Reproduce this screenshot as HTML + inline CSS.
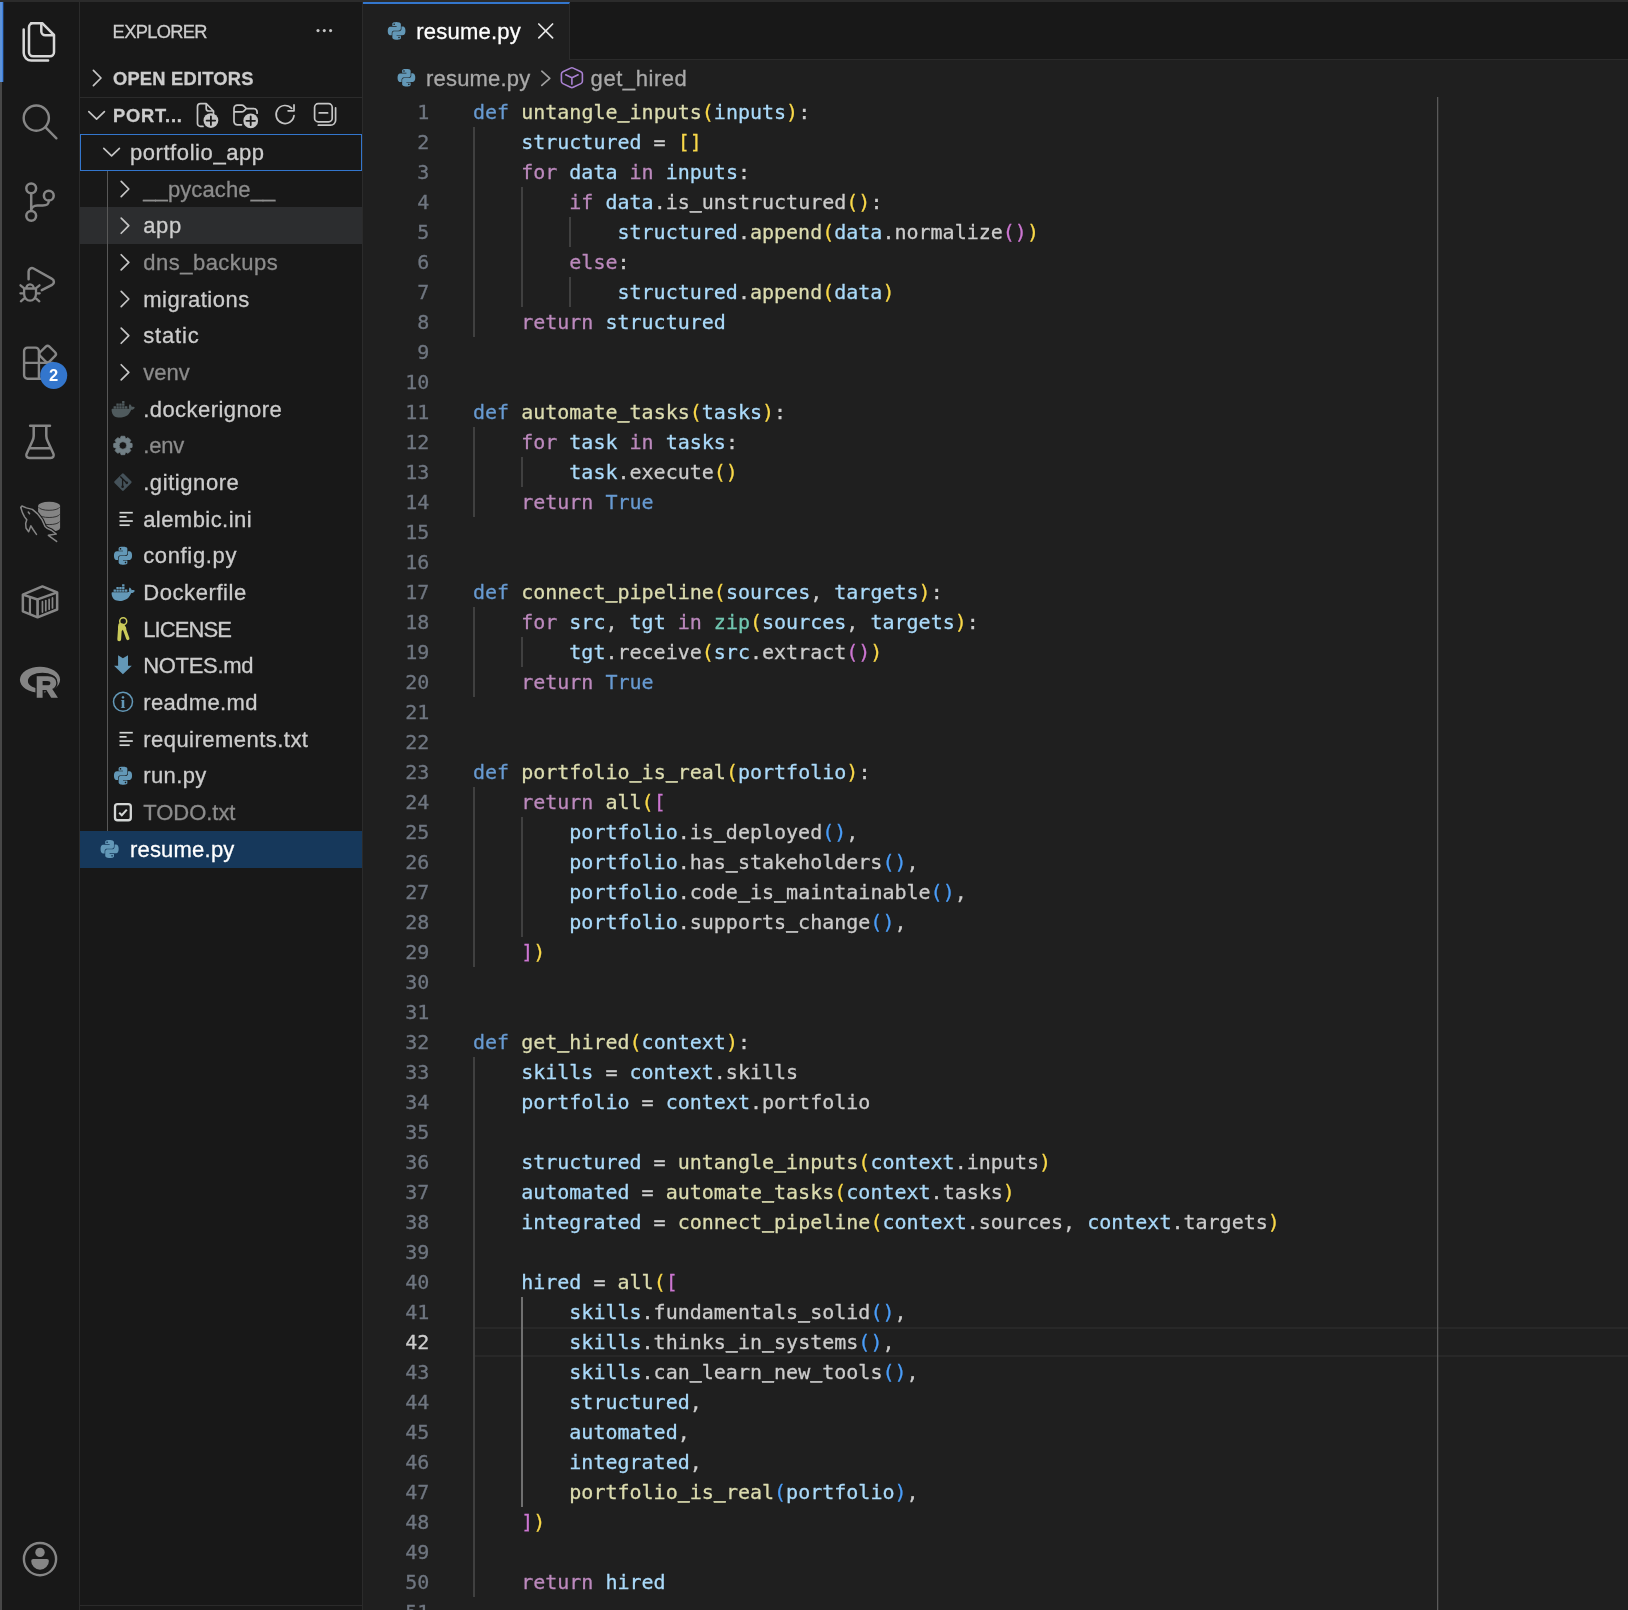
<!DOCTYPE html><html><head><meta charset="utf-8"><title>resume.py</title><style>
*{box-sizing:border-box;margin:0;padding:0}
html,body{width:1628px;height:1610px;overflow:hidden;background:#181818}
body{position:relative;-webkit-text-stroke:0.3px;font-family:"Liberation Sans",sans-serif;color:#cccccc;will-change:transform}
.abs{position:absolute}
#topline{position:absolute;left:0;top:0;width:1628px;height:2px;background:#2b2b2b}
#leftstrip{position:absolute;left:0;top:82px;width:2px;height:1528px;background:#474747}
#act{position:absolute;left:0;top:2px;width:80px;height:1608px;background:#181818;border-right:1px solid #2b2b2b}
#actind{position:absolute;left:0;top:2px;width:4px;height:80px;background:linear-gradient(90deg,#5f94da 0,#5f94da 2px,#3f80df 2px,#3f80df 3px,#223a58 3px,#223a58 4px)}
.ai{position:absolute;left:20px;width:40px;height:40px}
#side{position:absolute;left:80px;top:2px;width:283px;height:1608px;background:#181818;border-right:1px solid #2b2b2b}
#sidebot{position:absolute;left:80px;top:1605px;width:282px;height:1px;background:#2b2b2b}
.stitle{position:absolute;left:32.6px;top:19px;font-size:18.3px;line-height:22px;color:#cccccc;}
.ph{position:absolute;left:33px;font-size:18.3px;font-weight:bold;line-height:22px;color:#cccccc;}
.sep{position:absolute;left:0;width:282px;height:1px;background:#2b2b2b}
.row{position:absolute;left:0;width:282px;height:37px}
#side .tx{position:absolute;font-size:22px;line-height:26px;white-space:nowrap;color:#cccccc}
#side .tx.dim{color:#8c8c8c}
.row svg{position:absolute}
#ed{position:absolute;left:363px;top:2px;width:1265px;height:1608px;background:#1f1f1f}
#tabs{position:absolute;left:0;top:0;width:1265px;height:58px;background:#181818;border-bottom:1px solid #2b2b2b}
#tab{position:absolute;left:0;top:0;width:207px;height:58px;background:#1f1f1f;border-top:2px solid #3376cd;border-right:1px solid #2b2b2b}
#ov{position:absolute;left:0;top:0}
#tab .tx{position:absolute;left:53.3px;top:14.8px;font-size:22px;line-height:26px;color:#ffffff}
#bc{position:absolute;left:0;top:58px;width:1265px;height:37px}
#bc .tx{position:absolute;top:5.8px;font-size:22px;line-height:26px;color:#a9a9a9;white-space:nowrap}
#code{position:absolute;left:110px;top:95px;width:1155px;height:1520px;font-family:"DejaVu Sans Mono","Liberation Mono",monospace;font-size:20px;line-height:30px;color:#cccccc;white-space:pre}
.ln{position:absolute;left:-110px;width:66.3px;text-align:right;color:#6f7680;height:30px}
.ln.cur{color:#cccccc}
.cl{position:absolute;height:30px}
.cl i{font-style:normal;position:relative;top:-2.2px;text-shadow:0 1px 0 currentColor}
.k{color:#679ad1}.c{color:#bc89bd}.f{color:#dcdcaf}.v{color:#aadafa}.t{color:#71c6b1}
.b1{color:#f9d849}.b2{color:#cc76d1}.b3{color:#4a9df8}
.ig{position:absolute;width:2px;background:#404040}
.iga{background:#707070}
#curline{position:absolute;left:0;top:1230px;width:1155px;height:30px;border-top:2px solid #282828;border-bottom:2px solid #282828}
#ruler{z-index:3;position:absolute;left:1074px;top:95px;width:1px;height:1516px;background:#5a5a5a;box-shadow:1px 0 0 rgba(90,90,90,0.25)}
</style></head><body>
<div id="act"></div><div id="actind"></div><div id="leftstrip"></div>
<div id="side">
<span class="stitle" id="t_title" style="letter-spacing:-0.66px;margin-left:0.00px">EXPLORER</span>
<span class="ph" id="t_oe" style="top:66px;letter-spacing:0.23px;margin-left:0.00px">OPEN EDITORS</span>
<div class="sep" style="top:95px"></div>
<span class="ph" id="t_port" style="top:103px;letter-spacing:0.81px;margin-left:0.00px">PORT...</span>
<div class="row" style="top:132.00px;border:1px solid #3376cd"></div>
<span class="tx" id="r0" style="left:49.9px;top:137.8px;letter-spacing:0.58px;margin-left:0.00px">portfolio_app</span>
<div class="row" style="top:168.67px"></div>
<span class="tx dim" id="r1" style="left:63.2px;top:174.8px;letter-spacing:0.12px;margin-left:0.00px">__pycache__</span>
<div class="row" style="top:205.33px;background:#2c2d2f"></div>
<span class="tx" id="r2" style="left:63.2px;top:210.8px;letter-spacing:0.68px;margin-left:0.00px">app</span>
<div class="row" style="top:242.00px"></div>
<span class="tx dim" id="r3" style="left:63.2px;top:247.8px;letter-spacing:0.50px;margin-left:0.00px">dns_backups</span>
<div class="row" style="top:278.67px"></div>
<span class="tx" id="r4" style="left:63.2px;top:284.8px;letter-spacing:0.50px;margin-left:0.00px">migrations</span>
<div class="row" style="top:315.33px"></div>
<span class="tx" id="r5" style="left:63.2px;top:320.8px;letter-spacing:0.86px;margin-left:0.00px">static</span>
<div class="row" style="top:352.00px"></div>
<span class="tx dim" id="r6" style="left:63.2px;top:357.8px;letter-spacing:-0.01px;margin-left:0.00px">venv</span>
<div class="row" style="top:388.67px"></div>
<span class="tx" id="r7" style="left:63.2px;top:394.8px;letter-spacing:0.44px;margin-left:0.00px">.dockerignore</span>
<div class="row" style="top:425.33px"></div>
<span class="tx dim" id="r8" style="left:63.2px;top:430.8px;letter-spacing:-0.15px;margin-left:0.00px">.env</span>
<div class="row" style="top:462.00px"></div>
<span class="tx" id="r9" style="left:63.2px;top:467.8px;letter-spacing:0.57px;margin-left:0.00px">.gitignore</span>
<div class="row" style="top:498.67px"></div>
<span class="tx" id="r10" style="left:63.2px;top:504.8px;letter-spacing:0.44px;margin-left:0.00px">alembic.ini</span>
<div class="row" style="top:535.33px"></div>
<span class="tx" id="r11" style="left:63.2px;top:540.8px;letter-spacing:0.65px;margin-left:0.00px">config.py</span>
<div class="row" style="top:572.00px"></div>
<span class="tx" id="r12" style="left:63.2px;top:577.8px;letter-spacing:0.59px;margin-left:0.00px">Dockerfile</span>
<div class="row" style="top:608.67px"></div>
<span class="tx" id="r13" style="left:63.2px;top:614.8px;letter-spacing:-0.90px;margin-left:0.00px">LICENSE</span>
<div class="row" style="top:645.33px"></div>
<span class="tx" id="r14" style="left:63.2px;top:650.8px;letter-spacing:-0.30px;margin-left:0.00px">NOTES.md</span>
<div class="row" style="top:682.00px"></div>
<span class="tx" id="r15" style="left:63.2px;top:687.8px;letter-spacing:0.37px;margin-left:0.00px">readme.md</span>
<div class="row" style="top:718.67px"></div>
<span class="tx" id="r16" style="left:63.2px;top:724.8px;letter-spacing:0.47px;margin-left:0.00px">requirements.txt</span>
<div class="row" style="top:755.33px"></div>
<span class="tx" id="r17" style="left:63.2px;top:760.8px;letter-spacing:0.40px;margin-left:0.00px">run.py</span>
<div class="row" style="top:792.00px"></div>
<span class="tx dim" id="r18" style="left:63.2px;top:797.8px;letter-spacing:-0.03px;margin-left:0.00px">TODO.txt</span>
<div class="row" style="top:828.67px;background:#16385b"></div>
<span class="tx" id="r19" style="left:49.9px;top:834.8px;color:#ffffff;letter-spacing:0.22px;margin-left:0.00px">resume.py</span>
<div class="abs" style="left:27px;top:169px;width:1px;height:660px;background:#585858"></div>
</div><div id="sidebot"></div>
<div id="ed">
<div id="tabs"><div id="tab"><span class="tx" id="t_tab" style="letter-spacing:0.21px;margin-left:0.00px">resume.py</span></div></div>
<div id="bc"><span class="tx" id="t_bc1" style="left:63px;letter-spacing:0.20px;margin-left:0.00px">resume.py</span><span class="tx" id="t_bc2" style="left:227.6px;letter-spacing:0.56px;margin-left:0.00px">get_hired</span></div>
<div id="ruler"></div>
<div id="code"><div id="curline"></div><div class="ln" style="top:0px">1</div>
<div class="ln" style="top:30px">2</div>
<div class="ln" style="top:60px">3</div>
<div class="ln" style="top:90px">4</div>
<div class="ln" style="top:120px">5</div>
<div class="ln" style="top:150px">6</div>
<div class="ln" style="top:180px">7</div>
<div class="ln" style="top:210px">8</div>
<div class="ln" style="top:240px">9</div>
<div class="ln" style="top:270px">10</div>
<div class="ln" style="top:300px">11</div>
<div class="ln" style="top:330px">12</div>
<div class="ln" style="top:360px">13</div>
<div class="ln" style="top:390px">14</div>
<div class="ln" style="top:420px">15</div>
<div class="ln" style="top:450px">16</div>
<div class="ln" style="top:480px">17</div>
<div class="ln" style="top:510px">18</div>
<div class="ln" style="top:540px">19</div>
<div class="ln" style="top:570px">20</div>
<div class="ln" style="top:600px">21</div>
<div class="ln" style="top:630px">22</div>
<div class="ln" style="top:660px">23</div>
<div class="ln" style="top:690px">24</div>
<div class="ln" style="top:720px">25</div>
<div class="ln" style="top:750px">26</div>
<div class="ln" style="top:780px">27</div>
<div class="ln" style="top:810px">28</div>
<div class="ln" style="top:840px">29</div>
<div class="ln" style="top:870px">30</div>
<div class="ln" style="top:900px">31</div>
<div class="ln" style="top:930px">32</div>
<div class="ln" style="top:960px">33</div>
<div class="ln" style="top:990px">34</div>
<div class="ln" style="top:1020px">35</div>
<div class="ln" style="top:1050px">36</div>
<div class="ln" style="top:1080px">37</div>
<div class="ln" style="top:1110px">38</div>
<div class="ln" style="top:1140px">39</div>
<div class="ln" style="top:1170px">40</div>
<div class="ln" style="top:1200px">41</div>
<div class="ln cur" style="top:1230px">42</div>
<div class="ln" style="top:1260px">43</div>
<div class="ln" style="top:1290px">44</div>
<div class="ln" style="top:1320px">45</div>
<div class="ln" style="top:1350px">46</div>
<div class="ln" style="top:1380px">47</div>
<div class="ln" style="top:1410px">48</div>
<div class="ln" style="top:1440px">49</div>
<div class="ln" style="top:1470px">50</div>
<div class="ln" style="top:1500px">51</div>
<div class="cl" style="top:0px;left:0.00px"><span class="k">def</span> <span class="f">untangle<i>_</i>inputs</span><span class="b1">(</span><span class="v">inputs</span><span class="b1">)</span>:</div>
<div class="cl" style="top:30px;left:48.16px"><span class="v">structured</span> = <span class="b1">[]</span></div>
<div class="cl" style="top:60px;left:48.16px"><span class="c">for</span> <span class="v">data</span> <span class="c">in</span> <span class="v">inputs</span>:</div>
<div class="cl" style="top:90px;left:96.32px"><span class="c">if</span> <span class="v">data</span>.is<i>_</i>unstructured<span class="b1">()</span>:</div>
<div class="cl" style="top:120px;left:144.48px"><span class="v">structured</span>.<span class="f">append</span><span class="b1">(</span><span class="v">data</span>.normalize<span class="b2">()</span><span class="b1">)</span></div>
<div class="cl" style="top:150px;left:96.32px"><span class="c">else</span>:</div>
<div class="cl" style="top:180px;left:144.48px"><span class="v">structured</span>.<span class="f">append</span><span class="b1">(</span><span class="v">data</span><span class="b1">)</span></div>
<div class="cl" style="top:210px;left:48.16px"><span class="c">return</span> <span class="v">structured</span></div>
<div class="cl" style="top:300px;left:0.00px"><span class="k">def</span> <span class="f">automate<i>_</i>tasks</span><span class="b1">(</span><span class="v">tasks</span><span class="b1">)</span>:</div>
<div class="cl" style="top:330px;left:48.16px"><span class="c">for</span> <span class="v">task</span> <span class="c">in</span> <span class="v">tasks</span>:</div>
<div class="cl" style="top:360px;left:96.32px"><span class="v">task</span>.execute<span class="b1">()</span></div>
<div class="cl" style="top:390px;left:48.16px"><span class="c">return</span> <span class="k">True</span></div>
<div class="cl" style="top:480px;left:0.00px"><span class="k">def</span> <span class="f">connect<i>_</i>pipeline</span><span class="b1">(</span><span class="v">sources</span>, <span class="v">targets</span><span class="b1">)</span>:</div>
<div class="cl" style="top:510px;left:48.16px"><span class="c">for</span> <span class="v">src</span>, <span class="v">tgt</span> <span class="c">in</span> <span class="t">zip</span><span class="b1">(</span><span class="v">sources</span>, <span class="v">targets</span><span class="b1">)</span>:</div>
<div class="cl" style="top:540px;left:96.32px"><span class="v">tgt</span>.receive<span class="b1">(</span><span class="v">src</span>.extract<span class="b2">()</span><span class="b1">)</span></div>
<div class="cl" style="top:570px;left:48.16px"><span class="c">return</span> <span class="k">True</span></div>
<div class="cl" style="top:660px;left:0.00px"><span class="k">def</span> <span class="f">portfolio<i>_</i>is<i>_</i>real</span><span class="b1">(</span><span class="v">portfolio</span><span class="b1">)</span>:</div>
<div class="cl" style="top:690px;left:48.16px"><span class="c">return</span> <span class="f">all</span><span class="b1">(</span><span class="b2">[</span></div>
<div class="cl" style="top:720px;left:96.32px"><span class="v">portfolio</span>.is<i>_</i>deployed<span class="b3">()</span>,</div>
<div class="cl" style="top:750px;left:96.32px"><span class="v">portfolio</span>.has<i>_</i>stakeholders<span class="b3">()</span>,</div>
<div class="cl" style="top:780px;left:96.32px"><span class="v">portfolio</span>.code<i>_</i>is<i>_</i>maintainable<span class="b3">()</span>,</div>
<div class="cl" style="top:810px;left:96.32px"><span class="v">portfolio</span>.supports<i>_</i>change<span class="b3">()</span>,</div>
<div class="cl" style="top:840px;left:48.16px"><span class="b2">]</span><span class="b1">)</span></div>
<div class="cl" style="top:930px;left:0.00px"><span class="k">def</span> <span class="f">get<i>_</i>hired</span><span class="b1">(</span><span class="v">context</span><span class="b1">)</span>:</div>
<div class="cl" style="top:960px;left:48.16px"><span class="v">skills</span> = <span class="v">context</span>.skills</div>
<div class="cl" style="top:990px;left:48.16px"><span class="v">portfolio</span> = <span class="v">context</span>.portfolio</div>
<div class="cl" style="top:1050px;left:48.16px"><span class="v">structured</span> = <span class="f">untangle<i>_</i>inputs</span><span class="b1">(</span><span class="v">context</span>.inputs<span class="b1">)</span></div>
<div class="cl" style="top:1080px;left:48.16px"><span class="v">automated</span> = <span class="f">automate<i>_</i>tasks</span><span class="b1">(</span><span class="v">context</span>.tasks<span class="b1">)</span></div>
<div class="cl" style="top:1110px;left:48.16px"><span class="v">integrated</span> = <span class="f">connect<i>_</i>pipeline</span><span class="b1">(</span><span class="v">context</span>.sources, <span class="v">context</span>.targets<span class="b1">)</span></div>
<div class="cl" style="top:1170px;left:48.16px"><span class="v">hired</span> = <span class="f">all</span><span class="b1">(</span><span class="b2">[</span></div>
<div class="cl" style="top:1200px;left:96.32px"><span class="v">skills</span>.fundamentals<i>_</i>solid<span class="b3">()</span>,</div>
<div class="cl" style="top:1230px;left:96.32px"><span class="v">skills</span>.thinks<i>_</i>in<i>_</i>systems<span class="b3">()</span>,</div>
<div class="cl" style="top:1260px;left:96.32px"><span class="v">skills</span>.can<i>_</i>learn<i>_</i>new<i>_</i>tools<span class="b3">()</span>,</div>
<div class="cl" style="top:1290px;left:96.32px"><span class="v">structured</span>,</div>
<div class="cl" style="top:1320px;left:96.32px"><span class="v">automated</span>,</div>
<div class="cl" style="top:1350px;left:96.32px"><span class="v">integrated</span>,</div>
<div class="cl" style="top:1380px;left:96.32px"><span class="f">portfolio<i>_</i>is<i>_</i>real</span><span class="b3">(</span><span class="v">portfolio</span><span class="b3">)</span>,</div>
<div class="cl" style="top:1410px;left:48.16px"><span class="b2">]</span><span class="b1">)</span></div>
<div class="cl" style="top:1470px;left:48.16px"><span class="c">return</span> <span class="v">hired</span></div>
<div class="ig" style="left:0.0px;top:30px;height:210px"></div>
<div class="ig" style="left:48.2px;top:90px;height:120px"></div>
<div class="ig" style="left:96.3px;top:120px;height:30px"></div>
<div class="ig" style="left:96.3px;top:180px;height:30px"></div>
<div class="ig" style="left:0.0px;top:330px;height:90px"></div>
<div class="ig" style="left:48.2px;top:360px;height:30px"></div>
<div class="ig" style="left:0.0px;top:510px;height:90px"></div>
<div class="ig" style="left:48.2px;top:540px;height:30px"></div>
<div class="ig" style="left:0.0px;top:690px;height:180px"></div>
<div class="ig" style="left:48.2px;top:720px;height:120px"></div>
<div class="ig" style="left:0.0px;top:960px;height:540px"></div>
<div class="ig iga" style="left:48.2px;top:1200px;height:210px"></div></div>
</div>
<div id="topline"></div>
<svg id="ov" width="1628" height="1610" viewBox="0 0 1628 1610">
<path d="M31 23.2h11.2l11.8 11.8v17.2a4 4 0 0 1-4 4h-17a4 4 0 0 1-4-4v-25a4 4 0 0 1 4-4z" fill="none" stroke="#d7d7d7" stroke-width="2.5" stroke-linecap="round" stroke-linejoin="round" />
<path d="M41.3 23.4v7.8a4 4 0 0 0 4 4h8.2" fill="none" stroke="#d7d7d7" stroke-width="2.5" stroke-linecap="round" stroke-linejoin="round" />
<path d="M23.7 29.5v23.5a7.6 7.6 0 0 0 7.6 7.6h16.8" fill="none" stroke="#d7d7d7" stroke-width="2.5" stroke-linecap="round" stroke-linejoin="round" />
<circle cx="36.3" cy="118.1" r="12.6" fill="none" stroke="#868686" stroke-width="2.4" stroke-linecap="round" stroke-linejoin="round" /><path d="M45.6 127.4L56.4 138.3" fill="none" stroke="#868686" stroke-width="2.4" stroke-linecap="round" stroke-linejoin="round" />
<circle cx="31.2" cy="188.3" r="4.9" fill="none" stroke="#868686" stroke-width="2.5" stroke-linecap="round" stroke-linejoin="round" />
<circle cx="31.2" cy="215.8" r="4.9" fill="none" stroke="#868686" stroke-width="2.5" stroke-linecap="round" stroke-linejoin="round" />
<circle cx="48.8" cy="195.7" r="4.9" fill="none" stroke="#868686" stroke-width="2.5" stroke-linecap="round" stroke-linejoin="round" />
<path d="M31.2 193.3V210.8M48.8 200.8c0 4.6-3 4.7-6 4.7h-5.5c-3.5 0-6 2-6.1 5.3" fill="none" stroke="#868686" stroke-width="2.5" stroke-linecap="round" stroke-linejoin="round" />
<path d="M28.6 279.2V271.5a3.4 3.4 0 0 1 5-3l18.5 10.4a3.4 3.4 0 0 1 0 6L41.8 290.2" fill="none" stroke="#868686" stroke-width="2.5" stroke-linecap="round" stroke-linejoin="round" />
<path d="M24.1 288.5h11.9v5.6a5.95 6.6 0 0 1-11.9 0zM26.3 288.2a3.7 3.9 0 0 1 7.4 0M20.5 285.3l3.4 2.9M39.5 285.3l-3.4 2.9M20.4 293.3h3.5M36.2 293.3h3.5M20.9 301.3l3.9-3.5M39.3 301.3l-3.9-3.5" fill="none" stroke="#868686" stroke-width="2.3" stroke-linecap="round" stroke-linejoin="round" />
<path d="M27.5 347.6h8a3.4 3.4 0 0 1 3.4 3.4v27.7h-11.4a3.4 3.4 0 0 1-3.4-3.4v-24.3a3.4 3.4 0 0 1 3.4-3.4zM24.1 362.9h29M38.9 378.7h12" fill="none" stroke="#868686" stroke-width="2.4" stroke-linecap="round" stroke-linejoin="round" />
<rect x="41" y="347.5" width="13.2" height="13.2" rx="2.6" transform="rotate(45 47.6 354.1)" fill="none" stroke="#868686" stroke-width="2.4" stroke-linecap="round" stroke-linejoin="round" />
<circle cx="53.7" cy="375.4" r="13.5" fill="#3376cd"/>
<text x="53.7" y="381.3" text-anchor="middle" font-family="Liberation Sans, sans-serif" font-weight="bold" font-size="16.5" fill="#ffffff">2</text>
<path d="M30.1 425.7H50M33.7 425.9V436c0 2.2-.5 3.5-1.400 5.300L26.600 453.700c-1 2.200.2 4.400 2.800 4.400h21.200c2.600 0 3.800-2.200 2.800-4.400L47.700 441.300c-.9-1.800-1.400-3.100-1.400-5.300V425.900M30.800 448.200h18.400" fill="none" stroke="#868686" stroke-width="2.5" stroke-linecap="round" stroke-linejoin="round" />
<path d="M38.1 505.7a11 3.9 0 0 1 22 0v22.3a11 3.9 0 0 1-22 0z" fill="#848484"/>
<path d="M38.6 507.2a10.6 3.6 0 0 0 21 0" fill="none" stroke="#333333" stroke-width="1"/>
<path d="M38.6 514.4a10.6 3.6 0 0 0 21 0" fill="none" stroke="#333333" stroke-width="1"/>
<path d="M38.6 521.5a10.6 3.6 0 0 0 21 0" fill="none" stroke="#333333" stroke-width="1"/>
<polygon points="20.81,507.52 21.93,506.03 26.4,507.89 32.36,509.38 37.58,513.85 42.05,519.82 45.04,526.53 47.27,528.39 51.37,530.25 56.22,533.98 48.39,535.29 52.12,538.08 56.59,541.43 51,539.57 43.54,534.73 36.46,534.35 33.11,529.51 30.87,525.78 28.64,531.74 26.03,528.02 25.65,523.54 26.77,519.82 24.54,516.84 22.3,512.36" fill="#181818"/>
<polyline points="32.36,509.38 37.58,513.85 42.05,519.82 45.04,526.53 47.27,528.39 51.37,530.25 56.22,533.98" fill="none" stroke="#181818" stroke-width="3.6" stroke-linejoin="round" stroke-linecap="round"/>
<polyline points="20.81,507.52 21.93,506.03 26.4,507.89 32.36,509.38 37.58,513.85 42.05,519.82 45.04,526.53 47.27,528.39 51.37,530.25 56.22,533.98 48.39,535.29 52.12,538.08 56.59,541.43" fill="none" stroke="#868686" stroke-width="1.5" stroke-linejoin="round" stroke-linecap="round"/>
<polyline points="20.81,507.52 22.3,512.36 24.54,516.84 26.77,519.82 25.65,523.54 26.03,528.02 28.64,531.74 30.87,525.78 33.11,529.51 36.46,534.35" fill="none" stroke="#868686" stroke-width="1.5" stroke-linejoin="round" stroke-linecap="round"/>
<polyline points="28.26,511.99 29.57,513.67" fill="none" stroke="#868686" stroke-width="1.5" stroke-linecap="round"/>
<polygon points="42.43,586.4 57.15,592.36 57.15,609.51 37.58,617.34 22.86,611.37 22.86,594.6" fill="none" stroke="#868686" stroke-width="2.5" stroke-linecap="round" stroke-linejoin="round" />
<polyline points="22.86,594.6 37.58,599.44 57.15,592.36" fill="none" stroke="#868686" stroke-width="2.5" stroke-linejoin="round"/>
<polyline points="37.58,599.44 37.58,617.34" fill="none" stroke="#868686" stroke-width="2.7"/>
<polyline points="29.94,597.02 29.94,614.35" fill="none" stroke="#868686" stroke-width="2.2"/>
<polyline points="42.43,601.68 42.43,612.12" fill="none" stroke="#868686" stroke-width="1.7" stroke-linecap="round"/>
<polyline points="45.78,600.56 45.78,610.63" fill="none" stroke="#868686" stroke-width="1.7" stroke-linecap="round"/>
<polyline points="49.14,599.44 49.14,609.14" fill="none" stroke="#868686" stroke-width="1.7" stroke-linecap="round"/>
<polyline points="52.49,597.95 52.49,608.02" fill="none" stroke="#868686" stroke-width="1.7" stroke-linecap="round"/>
<path fill-rule="evenodd" fill="#848484" d="M19.9 679.800a20.100 13 0 1 0 40.200 0a20.100 13 0 1 0-40.200 0zM27.900 680.900a14.500 8.200 0 1 0 29 0a14.500 8.200 0 1 0-29 0z"/>
<text x="35.6" y="697.2" font-family="Liberation Sans, sans-serif" font-weight="bold" font-size="30" fill="#181818" stroke="#181818" stroke-width="4.2" stroke-linejoin="round">R</text>
<text x="35.6" y="697.2" font-family="Liberation Sans, sans-serif" font-weight="bold" font-size="30" fill="#848484" stroke="#848484" stroke-width="1.5" stroke-linejoin="miter">R</text>
<circle cx="40" cy="1559.1" r="16.1" fill="none" stroke="#868686" stroke-width="2.4" stroke-linecap="round" stroke-linejoin="round" /><circle cx="40" cy="1552.4" r="4.7" fill="#868686"/>
<path d="M33.2 1558.900h13.700a2 2 0 0 1 2 2a8.850 8.800 0 0 1-17.700 0a2 2 0 0 1 2-2z" fill="#868686"/>
<circle cx="318" cy="30.6" r="1.55" fill="#c5c5c5"/>
<circle cx="324.3" cy="30.6" r="1.55" fill="#c5c5c5"/>
<circle cx="330.6" cy="30.6" r="1.55" fill="#c5c5c5"/>
<path d="M93.4 70.4L101.0 78L93.4 85.6" fill="none" stroke="#c5c5c5" stroke-width="1.7" stroke-linecap="round" stroke-linejoin="round" />
<path d="M88.8 111.6L96.6 119.19999999999999L104.39999999999999 111.6" fill="none" stroke="#c5c5c5" stroke-width="1.7" stroke-linecap="round" stroke-linejoin="round" />
<path d="M203 126.400h-2.500a3 3 0 0 1-3-3v-16.700a3 3 0 0 1 3-3h5.700l7.300 7.300v2.400M206.200 103.900v4.500a2.600 2.600 0 0 0 2.600 2.600h4.500" fill="none" stroke="#c5c5c5" stroke-width="1.7" stroke-linecap="round" stroke-linejoin="round" />
<circle cx="210.9" cy="120.6" r="7.4" fill="#c5c5c5"/><path d="M206.600 120.600h8.600M210.900 116.300v8.600" fill="none" stroke="#181818" stroke-width="1.8" stroke-linecap="round" stroke-linejoin="round" />
<path d="M241.500 124.800h-4.200a3.300 3.300 0 0 1-3.300-3.300v-13a3.300 3.300 0 0 1 3.300-3.300h4.300c1 0 1.900.4 2.600 1.100l2.300 2.300h7.300a3.300 3.300 0 0 1 3.300 3.300v1.300M234.200 111.900h7.300c1 0 1.900-.4 2.600-1.100l2.300-2.300" fill="none" stroke="#c5c5c5" stroke-width="1.7" stroke-linecap="round" stroke-linejoin="round" />
<circle cx="250.7" cy="120.800" r="7.4" fill="#c5c5c5"/><path d="M246.400 120.800h8.600M250.700 116.500v8.600" fill="none" stroke="#181818" stroke-width="1.8" stroke-linecap="round" stroke-linejoin="round" />
<path d="M294 115.700a9 9 0 1 1-2.300-7.300" fill="none" stroke="#c5c5c5" stroke-width="1.7" stroke-linecap="round" stroke-linejoin="round" /><path d="M294 104.900v5.900h-5.900" fill="none" stroke="#c5c5c5" stroke-width="1.7" stroke-linecap="round" stroke-linejoin="round" />
<rect x="314.600" y="103.700" width="17.600" height="18.100" rx="3.600" fill="none" stroke="#c5c5c5" stroke-width="1.7" stroke-linecap="round" stroke-linejoin="round" /><path d="M319.200 112.900h8.400" fill="none" stroke="#c5c5c5" stroke-width="1.7" stroke-linecap="round" stroke-linejoin="round" />
<path d="M335.600 107.800v12.400a5 5 0 0 1-5 5h-12.300" fill="none" stroke="#c5c5c5" stroke-width="1.7" stroke-linecap="round" stroke-linejoin="round" />
<path d="M103.8 148.33335L111.6 155.93335L119.39999999999999 148.33335" fill="none" stroke="#c5c5c5" stroke-width="1.7" stroke-linecap="round" stroke-linejoin="round" />
<path d="M121.2 181.40005L128.8 189.00005L121.2 196.60004999999998" fill="none" stroke="#c5c5c5" stroke-width="1.7" stroke-linecap="round" stroke-linejoin="round" />
<path d="M121.2 218.06674999999998L128.8 225.66674999999998L121.2 233.26674999999997" fill="none" stroke="#c5c5c5" stroke-width="1.7" stroke-linecap="round" stroke-linejoin="round" />
<path d="M121.2 254.73345000000003L128.8 262.33345L121.2 269.93345000000005" fill="none" stroke="#c5c5c5" stroke-width="1.7" stroke-linecap="round" stroke-linejoin="round" />
<path d="M121.2 291.40014999999994L128.8 299.00014999999996L121.2 306.60015" fill="none" stroke="#c5c5c5" stroke-width="1.7" stroke-linecap="round" stroke-linejoin="round" />
<path d="M121.2 328.06684999999993L128.8 335.66684999999995L121.2 343.26685" fill="none" stroke="#c5c5c5" stroke-width="1.7" stroke-linecap="round" stroke-linejoin="round" />
<path d="M121.2 364.73355L128.8 372.33355L121.2 379.93355" fill="none" stroke="#c5c5c5" stroke-width="1.7" stroke-linecap="round" stroke-linejoin="round" />
<path transform="translate(111.6,397.70025) scale(0.9667)" fill="#4f5a5d" d="M13.983 11.078h2.119a.186.186 0 00.186-.185V9.006a.186.186 0 00-.186-.186h-2.119a.185.185 0 00-.185.185v1.888c0 .102.083.185.185.185m-2.954-5.43h2.118a.186.186 0 00.186-.186V3.574a.186.186 0 00-.186-.185h-2.118a.185.185 0 00-.185.185v1.888c0 .102.082.185.185.185m0 2.716h2.118a.187.187 0 00.186-.186V6.29a.186.186 0 00-.186-.185h-2.118a.185.185 0 00-.185.185v1.887c0 .102.082.185.185.186m-2.93 0h2.12a.186.186 0 00.184-.186V6.29a.185.185 0 00-.185-.185H8.1a.185.185 0 00-.185.185v1.887c0 .102.083.185.185.186m-2.964 0h2.119a.186.186 0 00.185-.186V6.29a.185.185 0 00-.185-.185H5.136a.186.186 0 00-.186.185v1.887c0 .102.084.185.186.186m5.893 2.715h2.118a.186.186 0 00.186-.185V9.006a.186.186 0 00-.186-.186h-2.118a.185.185 0 00-.185.185v1.888c0 .102.082.185.185.185m-2.93 0h2.12a.185.185 0 00.184-.185V9.006a.185.185 0 00-.184-.186h-2.12a.185.185 0 00-.184.185v1.888c0 .102.083.185.185.185m-2.964 0h2.119a.185.185 0 00.185-.185V9.006a.185.185 0 00-.184-.186h-2.12a.186.186 0 00-.186.186v1.887c0 .102.084.185.186.185m-2.92 0h2.12a.185.185 0 00.184-.185V9.006a.185.185 0 00-.184-.186h-2.12a.185.185 0 00-.184.185v1.888c0 .102.082.185.185.185M23.763 9.89c-.065-.051-.672-.51-1.954-.51-.338.001-.676.03-1.01.087-.248-1.7-1.653-2.53-1.716-2.566l-.344-.199-.226.327c-.284.438-.49.922-.612 1.43-.23.97-.09 1.882.403 2.661-.595.332-1.55.413-1.744.42H.751a.751.751 0 00-.75.748 11.376 11.376 0 00.692 4.062c.545 1.428 1.355 2.48 2.41 3.124 1.18.723 3.1 1.137 5.275 1.137.983.003 1.963-.086 2.93-.266a12.248 12.248 0 003.823-1.389c.98-.567 1.86-1.288 2.61-2.136 1.252-1.418 1.998-2.997 2.553-4.4h.221c1.372 0 2.215-.549 2.68-1.009.309-.293.55-.65.707-1.046l.098-.288Z"/>
<path d="M132.11 443.60L132.11 447.33L129.37 448.13L129.36 448.16L130.73 450.66L128.09 453.30L125.60 451.93L125.56 451.94L124.77 454.68L121.03 454.68L120.24 451.94L120.20 451.93L117.71 453.30L115.07 450.66L116.44 448.16L116.43 448.13L113.69 447.33L113.69 443.60L116.43 442.81L116.44 442.77L115.07 440.27L117.71 437.63L120.20 439.01L120.24 438.99L121.03 436.25L124.77 436.25L125.56 438.99L125.60 439.01L128.09 437.63L130.73 440.27L129.36 442.77L129.37 442.81ZM119.10000000000001 445.46695a3.8 3.8 0 1 0 7.6 0a3.8 3.8 0 1 0-7.6 0z" fill="#717f85" fill-rule="evenodd" stroke="#717f85" stroke-width="0.8" stroke-linejoin="round"/>
<rect x="116.4" y="475.63" width="13" height="13" rx="1.2" transform="rotate(45 122.9 482.13)" fill="#45525a"/>
<path d="M120.300 476.53l6.500 6.500M122.600 479.13v7.800" stroke="#181818" stroke-width="1.3" fill="none"/>
<circle cx="126.80000000000001" cy="482.83" r="1.3" fill="#181818"/>
<circle cx="122.60000000000001" cy="486.73" r="1.3" fill="#181818"/>
<path d="M119.500 512.70H132.8" stroke="#d4d7d6" stroke-width="1.7" fill="none"/>
<path d="M119.500 516.87H126.6" stroke="#d4d7d6" stroke-width="1.7" fill="none"/>
<path d="M119.500 521.04H132.8" stroke="#d4d7d6" stroke-width="1.7" fill="none"/>
<path d="M119.500 525.21H129.7" stroke="#d4d7d6" stroke-width="1.7" fill="none"/>
<path transform="translate(114.0,546.6670499999999) scale(0.7500)" fill="#6398b7" fill-rule="evenodd" d="M14.25.18l.9.2.73.26.59.3.45.32.34.34.25.34.16.33.1.3.04.26.02.2-.01.13V8.5l-.05.63-.13.55-.21.46-.26.38-.3.31-.33.25-.35.19-.35.14-.33.1-.3.07-.26.04-.21.02H8.77l-.69.05-.59.14-.5.22-.41.27-.33.32-.27.35-.2.36-.15.37-.1.35-.07.32-.04.27-.02.21v3.06H3.17l-.21-.03-.28-.07-.32-.12-.35-.18-.36-.26-.36-.36-.35-.46-.32-.59-.28-.73-.21-.88-.14-1.05-.05-1.23.06-1.22.16-1.04.24-.87.32-.71.36-.57.4-.44.42-.33.42-.24.4-.16.36-.1.32-.05.24-.01h.16l.06.01h8.16v-.83H6.18l-.01-2.75-.02-.37.05-.34.11-.31.17-.28.25-.26.31-.23.38-.2.44-.18.51-.15.58-.12.64-.1.71-.06.77-.04.84-.02 1.27.05zm-6.3 1.98l-.23.33-.08.41.08.41.23.34.33.22.41.09.41-.09.33-.22.23-.34.08-.41-.08-.41-.23-.33-.33-.22-.41-.09-.41.09zm13.09 3.95l.28.06.32.12.35.18.36.27.36.35.35.47.32.59.28.73.21.88.14 1.04.05 1.23-.06 1.23-.16 1.04-.24.86-.32.71-.36.57-.4.45-.42.33-.42.24-.4.16-.36.09-.32.05-.24.02-.16-.01h-8.22v.82h5.84l.01 2.76.02.36-.05.34-.11.31-.17.29-.25.25-.31.24-.38.2-.44.17-.51.15-.58.13-.64.09-.71.07-.77.04-.84.01-1.27-.04-1.07-.14-.9-.2-.73-.25-.59-.3-.45-.33-.34-.34-.25-.34-.16-.33-.1-.3-.04-.25-.02-.2.01-.13v-5.34l.05-.64.13-.54.21-.46.26-.38.3-.32.33-.24.35-.2.35-.14.33-.1.3-.06.26-.04.21-.02.13-.01h5.84l.69-.05.59-.14.5-.21.41-.28.33-.32.27-.35.2-.36.15-.36.1-.35.07-.32.04-.28.02-.21V6.07h2.09l.14.01zm-6.47 14.25l-.23.33-.08.41.08.41.23.33.33.23.41.08.41-.08.33-.23.23-.33.08-.41-.08-.41-.23-.33-.33-.23-.41-.08-.41.08z"/>
<path transform="translate(111.6,581.03375) scale(0.9667)" fill="#6398b7" d="M13.983 11.078h2.119a.186.186 0 00.186-.185V9.006a.186.186 0 00-.186-.186h-2.119a.185.185 0 00-.185.185v1.888c0 .102.083.185.185.185m-2.954-5.43h2.118a.186.186 0 00.186-.186V3.574a.186.186 0 00-.186-.185h-2.118a.185.185 0 00-.185.185v1.888c0 .102.082.185.185.185m0 2.716h2.118a.187.187 0 00.186-.186V6.29a.186.186 0 00-.186-.185h-2.118a.185.185 0 00-.185.185v1.887c0 .102.082.185.185.186m-2.93 0h2.12a.186.186 0 00.184-.186V6.29a.185.185 0 00-.185-.185H8.1a.185.185 0 00-.185.185v1.887c0 .102.083.185.185.186m-2.964 0h2.119a.186.186 0 00.185-.186V6.29a.185.185 0 00-.185-.185H5.136a.186.186 0 00-.186.185v1.887c0 .102.084.185.186.186m5.893 2.715h2.118a.186.186 0 00.186-.185V9.006a.186.186 0 00-.186-.186h-2.118a.185.185 0 00-.185.185v1.888c0 .102.082.185.185.185m-2.93 0h2.12a.185.185 0 00.184-.185V9.006a.185.185 0 00-.184-.186h-2.12a.185.185 0 00-.184.185v1.888c0 .102.083.185.185.185m-2.964 0h2.119a.185.185 0 00.185-.185V9.006a.185.185 0 00-.184-.186h-2.12a.186.186 0 00-.186.186v1.887c0 .102.084.185.186.185m-2.92 0h2.12a.185.185 0 00.184-.185V9.006a.185.185 0 00-.184-.186h-2.12a.185.185 0 00-.184.185v1.888c0 .102.082.185.185.185M23.763 9.89c-.065-.051-.672-.51-1.954-.51-.338.001-.676.03-1.01.087-.248-1.7-1.653-2.53-1.716-2.566l-.344-.199-.226.327c-.284.438-.49.922-.612 1.43-.23.97-.09 1.882.403 2.661-.595.332-1.55.413-1.744.42H.751a.751.751 0 00-.75.748 11.376 11.376 0 00.692 4.062c.545 1.428 1.355 2.48 2.41 3.124 1.18.723 3.1 1.137 5.275 1.137.983.003 1.963-.086 2.93-.266a12.248 12.248 0 003.823-1.389c.98-.567 1.86-1.288 2.61-2.136 1.252-1.418 1.998-2.997 2.553-4.4h.221c1.372 0 2.215-.549 2.68-1.009.309-.293.55-.65.707-1.046l.098-.288Z"/>
<g transform="translate(0 0.50)"><circle cx="123.200" cy="620.700" r="3.500" fill="none" stroke="#cbcb5a" stroke-width="1.5"/><path d="M120.200 624.300L119.200 638.800" stroke="#cbcb5a" stroke-width="3.800" stroke-linecap="round" fill="none"/><path d="M118 627.500a2.600 3 0 0 0 5.200 0a2.600 3 0 0 0-5.200 0z" fill="#cbcb5a"/><path d="M124 627.500L127.800 638" stroke="#cbcb5a" stroke-width="3.300" stroke-linecap="round" fill="none"/><path d="M122.500 625l1.800 3" stroke="#cbcb5a" stroke-width="4" stroke-linecap="round" fill="none"/></g>
<polygon points="118.10,655.17 122.90,658.27 128.00,655.17 128.00,665.77 131.80,665.77 122.90,674.27 114.00,665.77 118.10,665.77" fill="#6398b7"/>
<circle cx="123" cy="701.83" r="9.5" fill="none" stroke="#6398b7" stroke-width="1.5"/>
<text x="123" y="708.03" text-anchor="middle" font-family="Liberation Serif, serif" font-weight="bold" font-size="17.5" fill="#6398b7">i</text>
<path d="M119.500 732.70H132.8" stroke="#d4d7d6" stroke-width="1.7" fill="none"/>
<path d="M119.500 736.87H126.6" stroke="#d4d7d6" stroke-width="1.7" fill="none"/>
<path d="M119.500 741.04H132.8" stroke="#d4d7d6" stroke-width="1.7" fill="none"/>
<path d="M119.500 745.21H129.7" stroke="#d4d7d6" stroke-width="1.7" fill="none"/>
<path transform="translate(114.0,766.66725) scale(0.7500)" fill="#6398b7" fill-rule="evenodd" d="M14.25.18l.9.2.73.26.59.3.45.32.34.34.25.34.16.33.1.3.04.26.02.2-.01.13V8.5l-.05.63-.13.55-.21.46-.26.38-.3.31-.33.25-.35.19-.35.14-.33.1-.3.07-.26.04-.21.02H8.77l-.69.05-.59.14-.5.22-.41.27-.33.32-.27.35-.2.36-.15.37-.1.35-.07.32-.04.27-.02.21v3.06H3.17l-.21-.03-.28-.07-.32-.12-.35-.18-.36-.26-.36-.36-.35-.46-.32-.59-.28-.73-.21-.88-.14-1.05-.05-1.23.06-1.22.16-1.04.24-.87.32-.71.36-.57.4-.44.42-.33.42-.24.4-.16.36-.1.32-.05.24-.01h.16l.06.01h8.16v-.83H6.18l-.01-2.75-.02-.37.05-.34.11-.31.17-.28.25-.26.31-.23.38-.2.44-.18.51-.15.58-.12.64-.1.71-.06.77-.04.84-.02 1.27.05zm-6.3 1.98l-.23.33-.08.41.08.41.23.34.33.22.41.09.41-.09.33-.22.23-.34.08-.41-.08-.41-.23-.33-.33-.22-.41-.09-.41.09zm13.09 3.95l.28.06.32.12.35.18.36.27.36.35.35.47.32.59.28.73.21.88.14 1.04.05 1.23-.06 1.23-.16 1.04-.24.86-.32.71-.36.57-.4.45-.42.33-.42.24-.4.16-.36.09-.32.05-.24.02-.16-.01h-8.22v.82h5.84l.01 2.76.02.36-.05.34-.11.31-.17.29-.25.25-.31.24-.38.2-.44.17-.51.15-.58.13-.64.09-.71.07-.77.04-.84.01-1.27-.04-1.07-.14-.9-.2-.73-.25-.59-.3-.45-.33-.34-.34-.25-.34-.16-.33-.1-.3-.04-.25-.02-.2.01-.13v-5.34l.05-.64.13-.54.21-.46.26-.38.3-.32.33-.24.35-.2.35-.14.33-.1.3-.06.26-.04.21-.02.13-.01h5.84l.69-.05.59-.14.5-.21.41-.28.33-.32.27-.35.2-.36.15-.36.1-.35.07-.32.04-.28.02-.21V6.07h2.09l.14.01zm-6.47 14.25l-.23.33-.08.41.08.41.23.33.33.23.41.08.41-.08.33-.23.23-.33.08-.41-.08-.41-.23-.33-.33-.23-.41-.08-.41.08z"/>
<rect x="115" y="804.03" width="15.800" height="16.200" rx="2.600" fill="none" stroke="#d4d7d6" stroke-width="2.3"/>
<path d="M119.200 812.73l2.600 2.500l5-5.600" fill="none" stroke="#d4d7d6" stroke-width="2.100"/>
<path transform="translate(100.6,840.00065) scale(0.7500)" fill="#6398b7" fill-rule="evenodd" d="M14.25.18l.9.2.73.26.59.3.45.32.34.34.25.34.16.33.1.3.04.26.02.2-.01.13V8.5l-.05.63-.13.55-.21.46-.26.38-.3.31-.33.25-.35.19-.35.14-.33.1-.3.07-.26.04-.21.02H8.77l-.69.05-.59.14-.5.22-.41.27-.33.32-.27.35-.2.36-.15.37-.1.35-.07.32-.04.27-.02.21v3.06H3.17l-.21-.03-.28-.07-.32-.12-.35-.18-.36-.26-.36-.36-.35-.46-.32-.59-.28-.73-.21-.88-.14-1.05-.05-1.23.06-1.22.16-1.04.24-.87.32-.71.36-.57.4-.44.42-.33.42-.24.4-.16.36-.1.32-.05.24-.01h.16l.06.01h8.16v-.83H6.18l-.01-2.75-.02-.37.05-.34.11-.31.17-.28.25-.26.31-.23.38-.2.44-.18.51-.15.58-.12.64-.1.71-.06.77-.04.84-.02 1.27.05zm-6.3 1.98l-.23.33-.08.41.08.41.23.34.33.22.41.09.41-.09.33-.22.23-.34.08-.41-.08-.41-.23-.33-.33-.22-.41-.09-.41.09zm13.09 3.95l.28.06.32.12.35.18.36.27.36.35.35.47.32.59.28.73.21.88.14 1.04.05 1.23-.06 1.23-.16 1.04-.24.86-.32.71-.36.57-.4.45-.42.33-.42.24-.4.16-.36.09-.32.05-.24.02-.16-.01h-8.22v.82h5.84l.01 2.76.02.36-.05.34-.11.31-.17.29-.25.25-.31.24-.38.2-.44.17-.51.15-.58.13-.64.09-.71.07-.77.04-.84.01-1.27-.04-1.07-.14-.9-.2-.73-.25-.59-.3-.45-.33-.34-.34-.25-.34-.16-.33-.1-.3-.04-.25-.02-.2.01-.13v-5.34l.05-.64.13-.54.21-.46.26-.38.3-.32.33-.24.35-.2.35-.14.33-.1.3-.06.26-.04.21-.02.13-.01h5.84l.69-.05.59-.14.5-.21.41-.28.33-.32.27-.35.2-.36.15-.36.1-.35.07-.32.04-.28.02-.21V6.07h2.09l.14.01zm-6.47 14.25l-.23.33-.08.41.08.41.23.33.33.23.41.08.41-.08.33-.23.23-.33.08-.41-.08-.41-.23-.33-.33-.23-.41-.08-.41.08z"/>
<path transform="translate(387.8,22.1) scale(0.7333)" fill="#6398b7" fill-rule="evenodd" d="M14.25.18l.9.2.73.26.59.3.45.32.34.34.25.34.16.33.1.3.04.26.02.2-.01.13V8.5l-.05.63-.13.55-.21.46-.26.38-.3.31-.33.25-.35.19-.35.14-.33.1-.3.07-.26.04-.21.02H8.77l-.69.05-.59.14-.5.22-.41.27-.33.32-.27.35-.2.36-.15.37-.1.35-.07.32-.04.27-.02.21v3.06H3.17l-.21-.03-.28-.07-.32-.12-.35-.18-.36-.26-.36-.36-.35-.46-.32-.59-.28-.73-.21-.88-.14-1.05-.05-1.23.06-1.22.16-1.04.24-.87.32-.71.36-.57.4-.44.42-.33.42-.24.4-.16.36-.1.32-.05.24-.01h.16l.06.01h8.16v-.83H6.18l-.01-2.75-.02-.37.05-.34.11-.31.17-.28.25-.26.31-.23.38-.2.44-.18.51-.15.58-.12.64-.1.71-.06.77-.04.84-.02 1.27.05zm-6.3 1.98l-.23.33-.08.41.08.41.23.34.33.22.41.09.41-.09.33-.22.23-.34.08-.41-.08-.41-.23-.33-.33-.22-.41-.09-.41.09zm13.09 3.95l.28.06.32.12.35.18.36.27.36.35.35.47.32.59.28.73.21.88.14 1.04.05 1.23-.06 1.23-.16 1.04-.24.86-.32.71-.36.57-.4.45-.42.33-.42.24-.4.16-.36.09-.32.05-.24.02-.16-.01h-8.22v.82h5.84l.01 2.76.02.36-.05.34-.11.31-.17.29-.25.25-.31.24-.38.2-.44.17-.51.15-.58.13-.64.09-.71.07-.77.04-.84.01-1.27-.04-1.07-.14-.9-.2-.73-.25-.59-.3-.45-.33-.34-.34-.25-.34-.16-.33-.1-.3-.04-.25-.02-.2.01-.13v-5.34l.05-.64.13-.54.21-.46.26-.38.3-.32.33-.24.35-.2.35-.14.33-.1.3-.06.26-.04.21-.02.13-.01h5.84l.69-.05.59-.14.5-.21.41-.28.33-.32.27-.35.2-.36.15-.36.1-.35.07-.32.04-.28.02-.21V6.07h2.09l.14.01zm-6.47 14.25l-.23.33-.08.41.08.41.23.33.33.23.41.08.41-.08.33-.23.23-.33.08-.41-.08-.41-.23-.33-.33-.23-.41-.08-.41.08z"/>
<path d="M538.800 24L552.600 37.900M552.600 24L538.800 37.900" fill="none" stroke="#e6e6e6" stroke-width="1.7" stroke-linecap="round" stroke-linejoin="round" />
<path transform="translate(397.6,68.9) scale(0.7333)" fill="#6398b7" fill-rule="evenodd" d="M14.25.18l.9.2.73.26.59.3.45.32.34.34.25.34.16.33.1.3.04.26.02.2-.01.13V8.5l-.05.63-.13.55-.21.46-.26.38-.3.31-.33.25-.35.19-.35.14-.33.1-.3.07-.26.04-.21.02H8.77l-.69.05-.59.14-.5.22-.41.27-.33.32-.27.35-.2.36-.15.37-.1.35-.07.32-.04.27-.02.21v3.06H3.17l-.21-.03-.28-.07-.32-.12-.35-.18-.36-.26-.36-.36-.35-.46-.32-.59-.28-.73-.21-.88-.14-1.05-.05-1.23.06-1.22.16-1.04.24-.87.32-.71.36-.57.4-.44.42-.33.42-.24.4-.16.36-.1.32-.05.24-.01h.16l.06.01h8.16v-.83H6.18l-.01-2.75-.02-.37.05-.34.11-.31.17-.28.25-.26.31-.23.38-.2.44-.18.51-.15.58-.12.64-.1.71-.06.77-.04.84-.02 1.27.05zm-6.3 1.98l-.23.33-.08.41.08.41.23.34.33.22.41.09.41-.09.33-.22.23-.34.08-.41-.08-.41-.23-.33-.33-.22-.41-.09-.41.09zm13.09 3.95l.28.06.32.12.35.18.36.27.36.35.35.47.32.59.28.73.21.88.14 1.04.05 1.23-.06 1.23-.16 1.04-.24.86-.32.71-.36.57-.4.45-.42.33-.42.24-.4.16-.36.09-.32.05-.24.02-.16-.01h-8.22v.82h5.84l.01 2.76.02.36-.05.34-.11.31-.17.29-.25.25-.31.24-.38.2-.44.17-.51.15-.58.13-.64.09-.71.07-.77.04-.84.01-1.27-.04-1.07-.14-.9-.2-.73-.25-.59-.3-.45-.33-.34-.34-.25-.34-.16-.33-.1-.3-.04-.25-.02-.2.01-.13v-5.34l.05-.64.13-.54.21-.46.26-.38.3-.32.33-.24.35-.2.35-.14.33-.1.3-.06.26-.04.21-.02.13-.01h5.84l.69-.05.59-.14.5-.21.41-.28.33-.32.27-.35.2-.36.15-.36.1-.35.07-.32.04-.28.02-.21V6.07h2.09l.14.01zm-6.47 14.25l-.23.33-.08.41.08.41.23.33.33.23.41.08.41-.08.33-.23.23-.33.08-.41-.08-.41-.23-.33-.33-.23-.41-.08-.41.08z"/>
<path d="M541.800 71.200L549.800 78.300L541.800 85.400" fill="none" stroke="#a0a0a0" stroke-width="1.7" stroke-linecap="round" stroke-linejoin="round" />
<path d="M570.600 68.100a3 3 0 0 1 2.600 0l7.700 3.700a2.600 2.600 0 0 1 1.500 2.300v7.200a2.600 2.600 0 0 1-1.500 2.300l-7.700 3.700a3 3 0 0 1-2.600 0l-7.700-3.700a2.600 2.600 0 0 1-1.500-2.300v-7.200a2.600 2.600 0 0 1 1.500-2.300z" fill="none" stroke="#aa82d2" stroke-width="1.6" stroke-linecap="round" stroke-linejoin="round" />
<path d="M565.700 74.800L571.900 77.700L578.100 74.800M571.900 77.700V84.300" fill="none" stroke="#aa82d2" stroke-width="1.6" stroke-linecap="round" stroke-linejoin="round" />
</svg>
</body></html>
